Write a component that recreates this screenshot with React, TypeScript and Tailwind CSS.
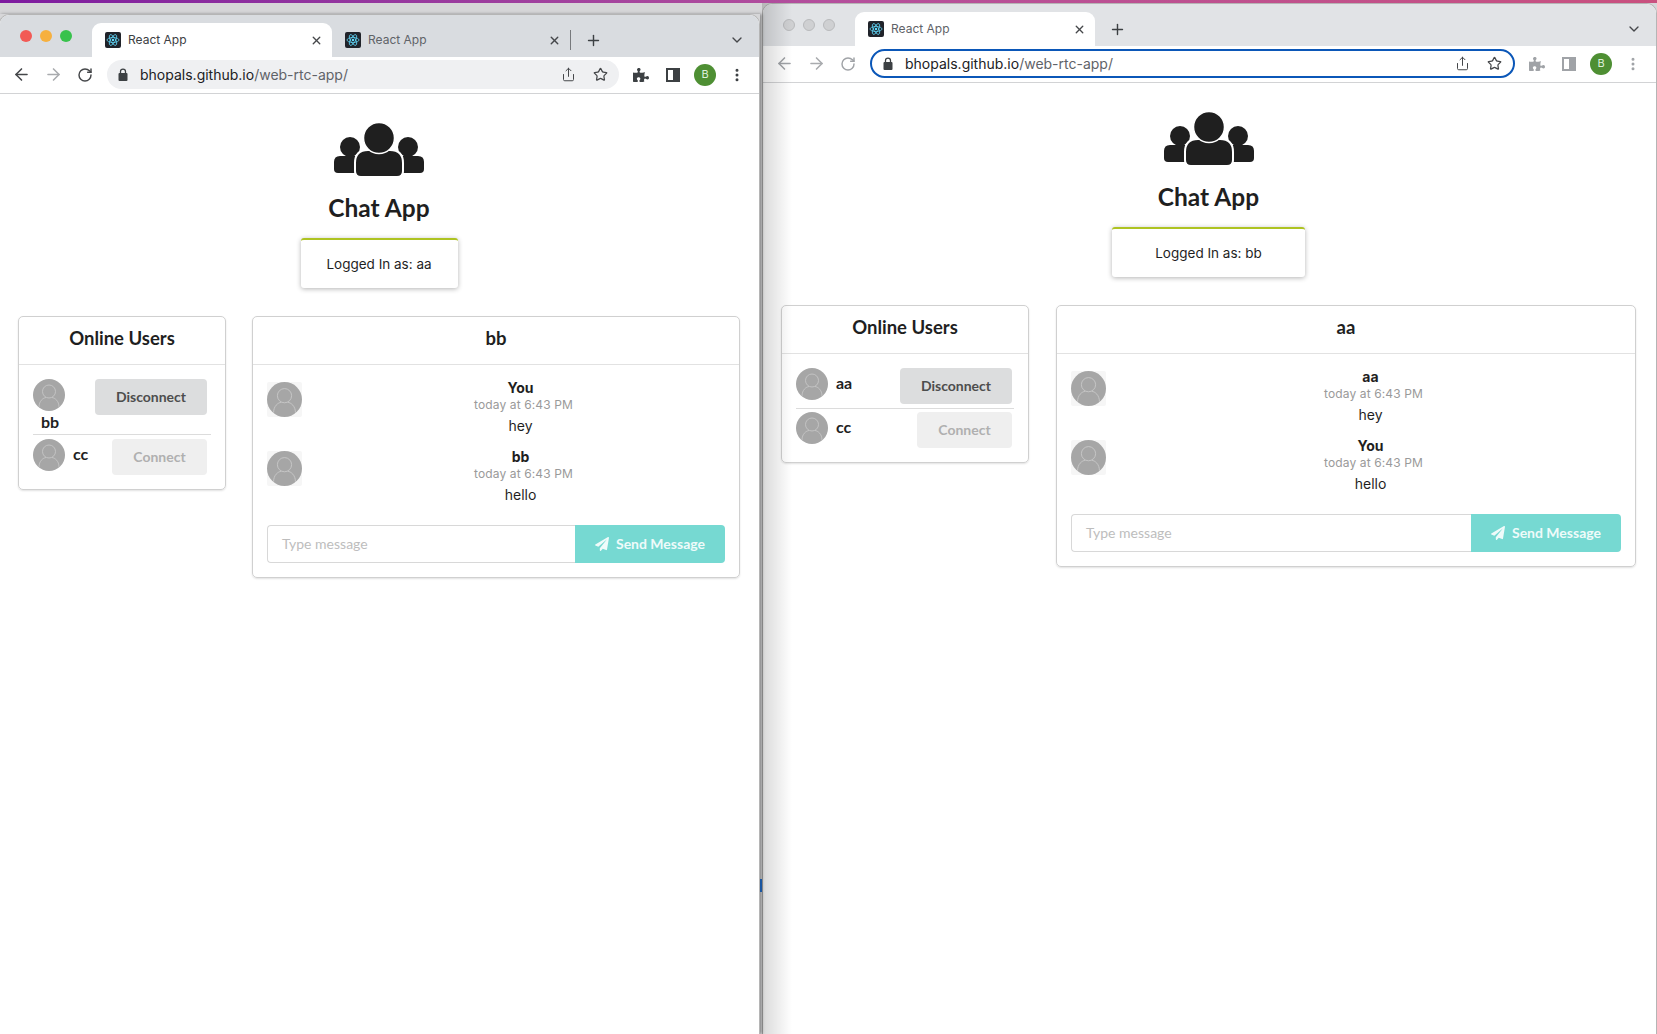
import { ArrowLeft, ArrowRight, ChevronDown, EllipsisVertical, Plus, RotateCw, Share, Star, X } from 'lucide-react';
import { FaPaperPlane, FaPuzzlePiece } from 'react-icons/fa';

const lato = "font-['Lato',sans-serif]";
const inter = "font-['Inter',sans-serif]";

function Favicon() {
  return (
    <div className="flex h-4 w-4 shrink-0 items-center justify-center rounded-[2px] bg-[#20232a]">
      <svg viewBox="0 0 32 32" className="h-4 w-4" fill="none" stroke="#61dafb" strokeWidth="1.5">
        <circle cx="16" cy="16" r="2.5" fill="#61dafb" stroke="none" />
        <ellipse cx="16" cy="16" rx="12" ry="5" />
        <ellipse cx="16" cy="16" rx="12" ry="5" transform="rotate(60 16 16)" />
        <ellipse cx="16" cy="16" rx="12" ry="5" transform="rotate(120 16 16)" />
      </svg>
    </div>
  );
}

function UsersLogo() {
  return (
    <svg viewBox="0 0 90 54" className="mt-[29px] h-[54px] w-[90px]" fill="#1f1f1f">
      <circle cx="16" cy="24" r="10" />
      <circle cx="74" cy="24" r="10" />
      <path d="M6 33 H24 V50 H4 Q0 50 0 46 V39 Q0 33 6 33 Z" />
      <path d="M84 33 H66 V50 H86 Q90 50 90 46 V39 Q90 33 84 33 Z" />
      <path d="M34 27 H56 Q69 27 69 40 V48 Q69 54 63 54 H27 Q21 54 21 48 V40 Q21 27 34 27 Z" stroke="#ffffff" strokeWidth="2" />
      <circle cx="45" cy="15" r="15.5" stroke="#ffffff" strokeWidth="1.5" />
    </svg>
  );
}

function LockGlyph() {
  return (
    <svg viewBox="0 0 10 13" className="h-[13px] w-[10px] shrink-0" fill="#3c4043">
      <rect x="0.5" y="5" width="9" height="8" rx="1" />
      <path d="M2.5 5.5 V3.6 a2.5 2.5 0 0 1 5 0 V5.5" fill="none" stroke="#3c4043" strokeWidth="1.3" />
    </svg>
  );
}

function Tab({ active, dim, width }: { active?: boolean; dim?: boolean; width: string }) {
  return (
    <div className={`flex h-[34px] items-center pl-[13px] pr-[9px] ${width} ${active ? 'rounded-t-[9px] bg-white' : ''}`}>
      <Favicon />
      <span className={`ml-[7px] flex-1 text-xs ${inter} ${dim ? 'text-[#5f6368]' : 'text-[#3c4043]'}`}>React App</span>
      <X size={13} strokeWidth={2.5} className="text-[#45474a]" />
    </div>
  );
}

function ToolSlot({ children }: { children: React.ReactNode }) {
  return <div className="flex h-8 w-8 items-center justify-center">{children}</div>;
}

function AvatarCircle({ className }: { className: string }) {
  return (
    <svg viewBox="0 0 32 32" className={className}>
      <circle cx="16" cy="16" r="16" fill="#a6a6a6" />
      <g fill="none" stroke="#c9c9c9" strokeWidth="0.8">
        <circle cx="16" cy="12.5" r="6.5" />
        <path d="M6 28 C6 22 10 19 13 18.5 M26 28 C26 22 22 19 19 18.5" />
      </g>
    </svg>
  );
}

function UserRow({ name, stacked, connected, rowPad }: { name: string; stacked?: boolean; connected?: boolean; rowPad: string }) {
  const button = connected ? (
    <button className={`h-9 w-[112px] rounded-[4px] bg-[#dcddde] text-sm font-bold text-[#4d4d4d] ${lato}`}>Disconnect</button>
  ) : (
    <button className={`h-9 w-[95px] rounded-[4px] bg-[#efefef] text-sm font-bold text-[#b0b0b0] ${lato}`}>Connect</button>
  );
  return (
    <div className={`flex justify-between ${rowPad}`}>
      {stacked ? (
        <div className="flex h-[51px] flex-col">
          <AvatarCircle className="h-8 w-8 shrink-0" />
          <span className={`ml-[8px] text-base font-bold leading-[22px] text-[#1f1f1f] ${lato}`}>{name}</span>
        </div>
      ) : (
        <div className="flex items-start gap-2">
          <AvatarCircle className="h-8 w-8 shrink-0" />
          <span className={`mt-[4px] text-base font-bold leading-[22px] text-[#1f1f1f] ${lato}`}>{name}</span>
        </div>
      )}
      {button}
    </div>
  );
}

function Message({ author, text }: { author: string; text: string }) {
  return (
    <div className="flex h-[69px]">
      <div className="h-[35px] w-[35px] shrink-0 rounded-[2px] bg-[#f6f6f6]">
        <AvatarCircle className="h-[35px] w-[35px]" />
      </div>
      <div className={`-mr-[14px] flex-1 text-center ${inter} text-[#1f1f1f]`}>
        <div className="-mt-[4px] text-sm font-bold leading-[20px]">{author}</div>
        <div className="-mt-[2px] ml-[6px] text-xs leading-[18px] tracking-[0.01em] text-[#9a9a9a]">today at 6:43 PM</div>
        <div className="text-sm leading-[23px]">{text}</div>
      </div>
    </div>
  );
}

function BrowserWindow({
  focused,
  name,
  peer,
  sideWidth,
  gap,
  pad,
  boxWidth,
  rowPad,
  stacked,
  messages,
}: {
  focused?: boolean;
  name: string;
  peer: string;
  sideWidth: string;
  gap: string;
  pad: string;
  boxWidth: string;
  rowPad: string;
  stacked?: boolean;
  messages: { author: string; text: string }[];
}) {
  const dim = focused ? 'text-[#3c4043]' : 'text-[#a0a3a7]';
  return (
    <div className="flex h-full flex-col overflow-hidden rounded-t-[10px] border-x border-t border-[#b5b5b5] bg-white">
      {/* Tab strip */}
      <div className={`flex h-[42px] shrink-0 items-end ${focused ? 'bg-[#d9dce0]' : 'bg-[#e1e3e6]'}`}>
        <div className="flex h-[42px] w-[92px] shrink-0 items-center gap-2 pb-[1px] pl-5">
          <span className={`h-3 w-3 rounded-full ${focused ? 'bg-[#f25a55]' : 'border border-[#b9babc] bg-[#cfd0d2]'}`} />
          <span className={`h-3 w-3 rounded-full ${focused ? 'bg-[#f6b03f]' : 'border border-[#b9babc] bg-[#cfd0d2]'}`} />
          <span className={`h-3 w-3 rounded-full ${focused ? 'bg-[#38c24c]' : 'border border-[#b9babc] bg-[#cfd0d2]'}`} />
        </div>
        <Tab active dim={!focused} width="w-[240px]" />
        {focused && <Tab dim width="w-[238px]" />}
        {focused && <div className="mb-[7px] h-5 w-px bg-[#77797c]" />}
        <div className="flex h-[34px] w-[44px] items-center justify-center">
          <Plus size={17} strokeWidth={2} className="text-[#3c4043]" />
        </div>
        <div className="flex-1" />
        <div className="mr-[6px] flex h-[34px] w-8 items-center justify-center">
          <ChevronDown size={16} className="text-[#45474a]" />
        </div>
      </div>

      {/* Toolbar */}
      <div className={`flex h-[37px] shrink-0 items-center border-b border-[#d2d3d5] pb-[1px] pl-[5px] ${focused ? 'pr-[6px]' : 'pr-[7px]'}`}>
        <ToolSlot><ArrowLeft size={19} strokeWidth={2} className={focused ? 'text-[#45474a]' : 'text-[#a0a3a7]'} /></ToolSlot>
        <ToolSlot><ArrowRight size={19} strokeWidth={2} className="text-[#a9abae]" /></ToolSlot>
        <ToolSlot><RotateCw size={16} strokeWidth={2.2} className={focused ? 'text-[#45474a]' : 'text-[#a0a3a7]'} /></ToolSlot>
        <div
          className={`ml-[6px] flex h-[29px] flex-1 items-center rounded-full pl-[11px] pr-[11px] ${
            focused ? 'bg-[#eff0f2]' : 'border-2 border-[#0b57b8] bg-white'
          }`}
        >
          <LockGlyph />
          <span className={`ml-[12px] flex-1 text-sm text-[#5f6368] ${inter}`}>
            <span className="text-[#202124]">bhopals.github.io</span>/web-rtc-app/
          </span>
          <Share size={15} strokeWidth={1.6} className="mr-[17px] text-[#45474a]" />
          <Star size={15} strokeWidth={2} className="text-[#45474a]" />
        </div>
        <div className="ml-[6px] flex">
          <ToolSlot><FaPuzzlePiece size={16} className={dim} /></ToolSlot>
          <ToolSlot>
            <div className={`flex h-[14px] w-[14px] justify-end border-2 ${focused ? 'border-[#3c4043]' : 'border-[#a0a3a7]'}`}>
              <div className={`h-full w-[5px] ${focused ? 'bg-[#3c4043]' : 'bg-[#a0a3a7]'}`} />
            </div>
          </ToolSlot>
          <ToolSlot>
            <div className={`flex h-[22px] w-[22px] items-center justify-center rounded-full bg-[#4e8f33] text-[11px] text-[#dfeeda] ${inter}`}>B</div>
          </ToolSlot>
          <ToolSlot><EllipsisVertical size={16} strokeWidth={2.5} className={dim} /></ToolSlot>
        </div>
      </div>

      {/* Page */}
      <div className={`flex min-h-0 flex-1 flex-col ${pad}`}>
        <div className="flex flex-col items-center">
          <UsersLogo />
          <h2 className={`mt-[14px] text-[24.5px] font-bold leading-[34px] text-[#1f1f1f] ${lato}`}>Chat App</h2>
          <div className={`mt-[13px] flex h-[50px] items-center justify-center rounded-[3px] border-t-2 border-[#aec322] bg-white text-[13.5px] text-[#1f1f1f] shadow-[0_1px_5px_rgba(0,0,0,0.3)] ${boxWidth} ${inter}`}>
            Logged In as: {name}
          </div>
        </div>

        <div className={`mt-[28px] flex items-start ${gap}`}>
          <div className={`shrink-0 rounded-[5px] border border-[#d0d0d0] shadow-[0_1px_2px_rgba(0,0,0,0.12)] ${sideWidth}`}>
            <div className={`flex h-[48px] items-center justify-center border-b border-[#e2e2e2] pb-[3px] text-[18.5px] font-bold text-[#1f1f1f] ${lato}`}>
              Online Users
            </div>
            <div className="px-[14px] pb-[14px] pt-[14px]">
              <div className="border-b border-[#dcdcdc] pb-1">
                <UserRow name={peer} stacked={stacked} connected rowPad={rowPad} />
              </div>
              <div className={stacked ? 'pt-1' : 'pt-[3px]'}>
                <UserRow name="cc" rowPad={rowPad} />
              </div>
            </div>
          </div>

          <div className="min-w-0 flex-1 rounded-[5px] border border-[#d0d0d0] shadow-[0_1px_2px_rgba(0,0,0,0.12)]">
            <div className={`flex h-[48px] items-center justify-center border-b border-[#e2e2e2] pb-[3px] text-[18.5px] font-bold text-[#1f1f1f] ${lato}`}>
              {peer}
            </div>
            <div className="px-[14px] pb-[14px] pt-[17px]">
              {messages.map((m) => (
                <Message key={m.author} author={m.author} text={m.text} />
              ))}
              <div className="mt-[5px] flex h-[38px]">
                <div className={`flex min-w-0 flex-1 items-center rounded-l-[4px] border border-r-0 border-[#d8d8d8] pl-[14px] text-sm text-[#bdbdbd] ${lato}`}>
                  Type message
                </div>
                <button className={`flex w-[150px] items-center justify-center gap-[7px] rounded-r-[4px] bg-[#76d9d2] text-sm font-bold text-[#effbfa] ${lato}`}>
                  <FaPaperPlane size={14} />
                  Send Message
                </button>
              </div>
            </div>
          </div>
        </div>
      </div>
    </div>
  );
}

export default function App() {
  return (
    <div className="relative h-[1034px] w-[1657px] overflow-hidden bg-[#d6d6d8]">
      <div className="h-[3px] bg-gradient-to-r from-[#7e1a9f] via-[#b44f9c] to-[#c9517f]" />

      {/* Right window */}
      <div className="absolute bottom-0 left-[762px] right-0 top-[3px]">
        <BrowserWindow
          name="bb"
          peer="aa"
          sideWidth="w-[248px]"
          gap="gap-[27px]"
          pad="pl-[18px] pr-5"
          boxWidth="w-[193px]"
          rowPad="pr-[2px]"
          messages={[
            { author: 'aa', text: 'hey' },
            { author: 'You', text: 'hello' },
          ]}
        />
        <div className="pointer-events-none absolute inset-y-0 left-0 w-[30px] bg-gradient-to-r from-black/15 to-transparent" />
      </div>

      {/* Left window */}
      <div className="absolute bottom-0 left-[-1px] top-[14px] w-[761px] shadow-[2px_0_3px_rgba(0,0,0,0.35)]">
        <BrowserWindow
          focused
          name="aa"
          peer="bb"
          sideWidth="w-[208px]"
          gap="gap-[26px]"
          pad="pl-[18px] pr-[19px]"
          boxWidth="w-[157px]"
          rowPad="pr-[4px]"
          stacked
          messages={[
            { author: 'You', text: 'hey' },
            { author: 'bb', text: 'hello' },
          ]}
        />
      </div>
      <div className="absolute left-[760px] top-[879px] h-[13px] w-[2px] bg-[#1a56a0]" />
    </div>
  );
}
